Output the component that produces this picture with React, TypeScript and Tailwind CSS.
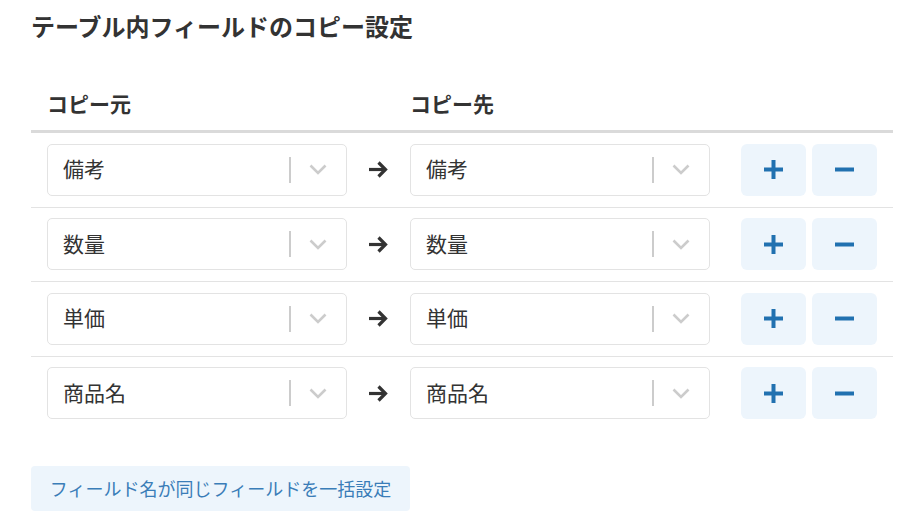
import React from "react";

const rows = ["備考", "数量", "単価", "商品名"];

const Chevron = () => (
  <svg width="18" height="11" viewBox="0 0 18 11" fill="none">
    <path d="M1.5 1.5 L9 9 L16.5 1.5" stroke="#cccccc" strokeWidth="2.6" />
  </svg>
);

const FieldSelect = ({ value }: { value: string }) => (
  <div className="flex items-center w-[300px] h-[52px] shrink-0 border border-[#e3e3e3] rounded-[5px] bg-white pl-[15px] pr-[19px]">
    <span className="flex-1 text-[21px] leading-[30px] pb-[3px] text-[#333333]">{value}</span>
    <div className="w-[2px] h-[26px] bg-[#cccccc]" />
    <div className="ml-[18px] flex items-center">
      <Chevron />
    </div>
  </div>
);

const ArrowRight = () => (
  <svg width="21" height="19" viewBox="0 0 21 19" fill="none">
    <path d="M1 9.5 H17.5" stroke="#333333" strokeWidth="3.2" />
    <path d="M10.5 2.5 L17.5 9.5 L10.5 16.5" stroke="#333333" strokeWidth="3.2" />
  </svg>
);

const IconButton = ({ kind }: { kind: "plus" | "minus" }) => (
  <button className="w-[65px] h-[52px] shrink-0 rounded-[6px] bg-[#edf5fc] flex items-center justify-center">
    <svg width="19" height="19" viewBox="0 0 19 19" fill="none">
      <path d="M0 9.5 H19" stroke="#2171b0" strokeWidth="4" />
      {kind === "plus" && <path d="M9.5 0 V19" stroke="#2171b0" strokeWidth="4" />}
    </svg>
  </button>
);

export default function App() {
  return (
    <div
      className="min-h-screen bg-white pl-[31px] pr-[10px] pt-[8px] text-[#333333]"
      style={{ fontFamily: '"Noto Sans CJK JP", "Noto Sans", sans-serif' }}
    >
      <h1 className="text-[24px] font-bold leading-[36px]">テーブル内フィールドのコピー設定</h1>

      <div className="w-[862px] mt-[44px]">
        {/* header */}
        <div className="flex pl-4 pb-3 border-b-[3px] border-[#dadada] text-[21px] font-bold leading-[30px]">
          <div className="w-[300px] shrink-0">コピー元</div>
          <div className="w-[63px] shrink-0" />
          <div>コピー先</div>
        </div>

        {rows.map((r, i) => (
          <div
            key={r}
            className={`flex items-center pl-4 py-[10.75px] ${i < rows.length - 1 ? "border-b border-[#e3e3e3]" : ""}`}
          >
            <FieldSelect value={r} />
            <div className="w-[63px] shrink-0 flex justify-center">
              <ArrowRight />
            </div>
            <FieldSelect value={r} />
            <div className="ml-[31px] flex gap-[6px]">
              <IconButton kind="plus" />
              <IconButton kind="minus" />
            </div>
          </div>
        ))}
      </div>

      <button className="mt-[36px] h-[45px] w-[379px] rounded-[4px] bg-[#edf5fc] text-[18px] text-[#3a7db8] text-center">
        フィールド名が同じフィールドを一括設定
      </button>
    </div>
  );
}
